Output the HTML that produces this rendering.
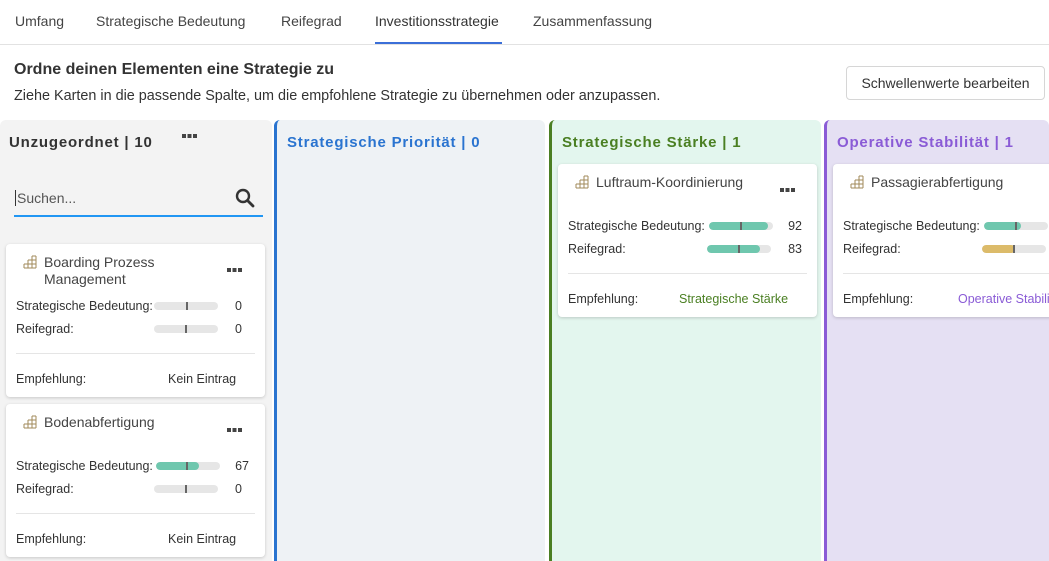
<!DOCTYPE html><html><head><style>
*{box-sizing:border-box;margin:0;padding:0}
body{width:1049px;height:561px;overflow:hidden;background:#fff;font-family:"Liberation Sans",sans-serif;color:#333;position:relative}
.a{position:absolute;white-space:nowrap}
.tab{position:absolute;top:13px;font-size:14px;color:#444}
.col{position:absolute;top:120px;height:441px;border-radius:6px 6px 0 0}
.ch{position:absolute;top:134px;font-size:15px;font-weight:bold;letter-spacing:0.8px}
.card{position:absolute;background:#fff;border-radius:4px;box-shadow:0 1px 3px rgba(0,0,0,.18);width:259px}
.card .t{position:absolute;left:38px;top:10px;font-size:14px;color:#444;line-height:17px}
.card .ic{position:absolute;left:17px;top:11px}
.dots{position:absolute;width:15px;height:4px;background:linear-gradient(90deg,#444 0 4px,transparent 4px 5.5px,#444 5.5px 9.5px,transparent 9.5px 11px,#444 11px 15px)}
.l{position:absolute;left:10px;font-size:12.5px;color:#333}
.bar{position:absolute;height:8px;width:64px;background:#e6e6e6;border-radius:4px;overflow:hidden}
.bar i{position:absolute;left:0;top:0;bottom:0;background:#6fc7ae;border-radius:4px}
.bar b{position:absolute;top:0;bottom:0;width:2px;background:#666}
.v{position:absolute;font-size:12.5px;text-align:right;width:30px}
.hr{position:absolute;left:10px;right:10px;height:1px;background:#e5e5e5}
</style></head><body>
<div class="tab" style="left:15px">Umfang</div>
<div class="tab" style="left:96px">Strategische Bedeutung</div>
<div class="tab" style="left:281px">Reifegrad</div>
<div class="tab" style="left:375px;color:#333">Investitionsstrategie</div>
<div class="tab" style="left:533px">Zusammenfassung</div>
<div class="a" style="left:375px;top:42px;width:127px;height:2px;background:#3b6fd8"></div>
<div class="a" style="left:0;top:44px;width:1049px;height:1px;background:#e2e2e2"></div>
<div class="a" style="left:14px;top:61px;font-size:16px;font-weight:bold;color:#333">Ordne deinen Elementen eine Strategie zu</div>
<div class="a" style="left:14px;top:88px;font-size:14.4px;color:#333">Ziehe Karten in die passende Spalte, um die empfohlene Strategie zu übernehmen oder anzupassen.</div>
<div class="a" style="left:846px;top:66px;width:199px;height:34px;border:1px solid #d6d6d6;border-radius:4px;font-size:14px;line-height:32px;text-align:center;color:#333">Schwellenwerte bearbeiten</div>

<div class="col" style="left:0;width:272px;background:#f3f3f3"></div>
<div class="col" style="left:274px;width:271px;background:#eef2f5;border-left:3px solid #2a74d0"></div>
<div class="col" style="left:549px;width:272px;background:#e3f6ee;border-left:3px solid #4a7f22"></div>
<div class="col" style="left:824px;width:225px;background:#e5e0f3;border-left:3px solid #8a5bd6"></div>
<div class="ch" style="left:9px;color:#333">Unzugeordnet | 10</div>
<div class="dots" style="left:182px;top:134px"></div>
<div class="ch" style="left:287px;color:#2a74d0">Strategische Priorität | 0</div>
<div class="ch" style="left:562px;color:#4a7f22">Strategische Stärke | 1</div>
<div class="ch" style="left:837px;color:#8a5bd6">Operative Stabilität | 1</div>
<div class="a" style="left:15px;top:190px;font-size:14px;color:#555;border-left:1px solid #333;padding-left:1px">Suchen...</div>
<svg class="a" style="left:235px;top:188px" width="20" height="20" viewBox="0 0 20 20"><circle cx="8" cy="8" r="6" fill="none" stroke="#333" stroke-width="2.4"/><path d="M12.5 12.5L18 18" stroke="#333" stroke-width="2.8" stroke-linecap="round"/></svg>
<div class="a" style="left:14px;top:215px;width:249px;height:2px;background:#2196f3"></div>

<div class="card" style="left:6px;top:244px;height:153px">
<svg class="ic" width="14" height="14" viewBox="0 0 14 14" fill="none" stroke="#a08a5a" stroke-width="1"><path d="M1 13H13M1 9H13M1 13V9M5 13V5M9 13V1M13 13V1M5 5H13M9 1H13"/></svg>
<div class="t">Boarding Prozess<br>Management</div><div class="dots" style="left:221px;top:24px"></div>
<div class="l" style="top:55px">Strategische Bedeutung:</div><div class="bar" style="left:148px;top:58px"><b style="left:32px"></b></div><div class="v" style="left:206px;top:55px">0</div>
<div class="l" style="top:78px">Reifegrad:</div><div class="bar" style="left:148px;top:81px"><b style="left:31px"></b></div><div class="v" style="left:206px;top:78px">0</div>
<div class="hr" style="top:109px"></div>
<div class="l" style="top:128px">Empfehlung:</div><div class="a" style="left:162px;top:128px;font-size:12.5px">Kein Eintrag</div>
</div>
<div class="card" style="left:6px;top:404px;height:153px">
<svg class="ic" width="14" height="14" viewBox="0 0 14 14" fill="none" stroke="#a08a5a" stroke-width="1"><path d="M1 13H13M1 9H13M1 13V9M5 13V5M9 13V1M13 13V1M5 5H13M9 1H13"/></svg>
<div class="t">Bodenabfertigung</div><div class="dots" style="left:221px;top:24px"></div>
<div class="l" style="top:55px">Strategische Bedeutung:</div><div class="bar" style="left:150px;top:58px"><i style="width:43px"></i><b style="left:30px"></b></div><div class="v" style="left:213px;top:55px">67</div>
<div class="l" style="top:78px">Reifegrad:</div><div class="bar" style="left:148px;top:81px"><b style="left:31px"></b></div><div class="v" style="left:206px;top:78px">0</div>
<div class="hr" style="top:109px"></div>
<div class="l" style="top:128px">Empfehlung:</div><div class="a" style="left:162px;top:128px;font-size:12.5px">Kein Eintrag</div>
</div>
<div class="card" style="left:558px;top:164px;height:153px">
<svg class="ic" width="14" height="14" viewBox="0 0 14 14" fill="none" stroke="#a08a5a" stroke-width="1"><path d="M1 13H13M1 9H13M1 13V9M5 13V5M9 13V1M13 13V1M5 5H13M9 1H13"/></svg>
<div class="t">Luftraum-Koordinierung</div><div class="dots" style="left:222px;top:24px"></div>
<div class="l" style="top:55px">Strategische Bedeutung:</div><div class="bar" style="left:151px;top:58px"><i style="width:59px"></i><b style="left:31px"></b></div><div class="v" style="left:214px;top:55px">92</div>
<div class="l" style="top:78px">Reifegrad:</div><div class="bar" style="left:149px;top:81px"><i style="width:53px"></i><b style="left:31px"></b></div><div class="v" style="left:214px;top:78px">83</div>
<div class="hr" style="top:109px"></div>
<div class="l" style="top:128px">Empfehlung:</div><div class="a" style="left:121px;top:128px;font-size:12.5px;color:#4a7f22">Strategische Stärke</div>
</div>
<div class="card" style="left:833px;top:164px;height:153px">
<svg class="ic" width="14" height="14" viewBox="0 0 14 14" fill="none" stroke="#a08a5a" stroke-width="1"><path d="M1 13H13M1 9H13M1 13V9M5 13V5M9 13V1M13 13V1M5 5H13M9 1H13"/></svg>
<div class="t">Passagierabfertigung</div>
<div class="l" style="top:55px">Strategische Bedeutung:</div><div class="bar" style="left:151px;top:58px"><i style="width:37px"></i><b style="left:31px"></b></div>
<div class="l" style="top:78px">Reifegrad:</div><div class="bar" style="left:149px;top:81px"><i style="width:33px;background:#dcbb6a"></i><b style="left:31px"></b></div>
<div class="hr" style="top:109px"></div>
<div class="l" style="top:128px">Empfehlung:</div><div class="a" style="left:125px;top:128px;font-size:12.5px;color:#8a5bd6">Operative Stabilität</div>
</div>
</body></html>
